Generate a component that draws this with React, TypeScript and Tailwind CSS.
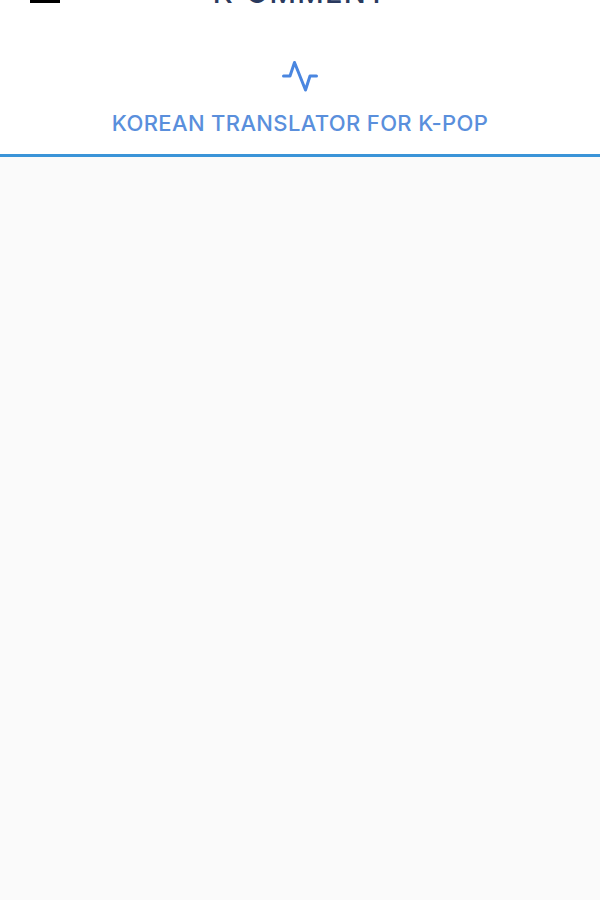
const App = () => {
  return (
    <div className="h-[900px] overflow-hidden flex flex-col bg-[#fafafa] font-['Inter',sans-serif]">
      <div className="bg-white border-b-[3px] border-[#3a94d8] h-[157px] flex flex-col items-center">
        <div className="w-full h-[38px] mt-[-22px] grid grid-cols-[1fr_auto_1fr] items-start px-[30px]">
          <div className="flex flex-col gap-[6px] pt-[4px]">
            <span className="block w-[30px] h-[3px] bg-black" />
            <span className="block w-[30px] h-[3px] bg-black" />
            <span className="block w-[30px] h-[3px] bg-black" />
          </div>
          <div className="text-[29px] leading-[30px] font-medium tracking-[1.3px] text-[#2a3a5e]">K-OMMENT</div>
          <div />
        </div>
        <svg className="mt-[43px]" width="36" height="34" viewBox="0 0 36 34" fill="none" stroke="#4a86e0" strokeWidth="3" strokeLinecap="round" strokeLinejoin="round">
          <path d="M1.5 17H8L12.5 3.5L23.5 31L28 17H34.5" />
        </svg>
        <div className="mt-[17px] text-[22px] leading-[26px] font-medium tracking-[0.35px] text-[#5a8fdc]">KOREAN TRANSLATOR FOR K-POP</div>
      </div>
    </div>
  );
};

export default App;
